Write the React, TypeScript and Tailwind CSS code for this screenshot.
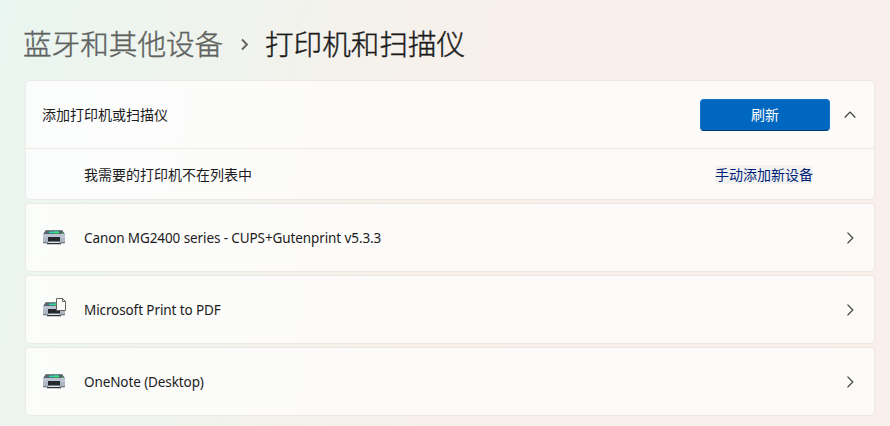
import type { ReactNode } from "react";

function PrinterIcon({ document = false }: { document?: boolean }) {
  return (
    <svg width="24" height="24" viewBox="0 0 24 24" className="block overflow-visible">
      <path d="M4 4h16l3 4.200H1z" fill="#56616a" />
      <path d="M4 4h16l.7 1H3.300z" fill="#77828a" />
      <path d="M7.500 5.500h9l.8 1.700H6.700z" fill="#2cd5b0" />
      <path d="M12.500 5.500h4l.8 1.700h-4.800z" fill="#36e66b" />
      <rect x="20" y="7" width="1.500" height="1" fill="#35e35d" />
      <path d="M1 8h22v8.500a.7.7 0 0 1-.7.7H1.700a.7.7 0 0 1-.7-.7z" fill="#adb7c4" />
      <path d="M1 8h22v4H1z" fill="#bac3cf" />
      <path d="M1 16h22v.500a.7.7 0 0 1-.7.7H1.700a.7.7 0 0 1-.7-.7z" fill="#747f8c" />
      <path d="M6 11h12v5H6z" fill="#24292f" />
      <path d="M6.500 15.500h11l1.300 1.800H5.200z" fill="#d5dae1" />
      <path d="M5.200 17h13.600l.3 1.200H4.900z" fill="#30353a" />
      {document && (
        <g stroke="#62625f" strokeWidth="1">
          <path d="M14.500.5h6l3 3v9h-9z" fill="#fcfcfb" />
          <path d="M20.500.5v3h3" fill="none" />
        </g>
      )}
    </svg>
  );
}

function Chevron({ up = false }: { up?: boolean }) {
  return (
    <svg width="14" height="14" viewBox="0 0 14 14" fill="none" stroke="#3b3b3b" strokeWidth="1.2" className="block">
      <path d={up ? "M1.700 9.500 7 4.200l5.300 5.300" : "M4.500 1.700 9.800 7l-5.300 5.300"} />
    </svg>
  );
}

function PrinterRow({ icon, children }: { icon: ReactNode; children: ReactNode }) {
  return (
    <button className="flex h-[69px] w-full items-center rounded-[5px] border border-[#8c50281c] bg-[linear-gradient(100deg,#fbfdfb,#fcfbf9_35%)] bg-origin-border pr-[17px] pl-4 text-left">
      {icon}
      <span className="ml-[18px] pt-px font-['Noto_Sans','Noto_Sans_CJK_SC',sans-serif] text-[13.500px] leading-5 tracking-[-0.1px] whitespace-nowrap">{children}</span>
      <span className="ml-auto"><Chevron /></span>
    </button>
  );
}

export default function App() {
  return (
    <main className="h-[426px] w-[890px] overflow-hidden bg-[linear-gradient(102deg,#eaf6f1_0%,#eef4ee_16%,#f3f2ed_34%,#f8f0ea_50%,#f9efed_64%,#f9f0ec_100%)] pr-[15px] pl-[25px] font-['Noto_Sans_CJK_SC',sans-serif] text-[14px] text-[#1b1b1b]">
      <h1 className="-ml-[2px] flex h-20 items-center pt-[7px] text-[28.600px] leading-10 font-light whitespace-nowrap [-webkit-text-stroke:0.4px_currentColor]">
        <span className="-mt-[2px] w-[200px] text-[#606260]">蓝牙和其他设备</span>
        <svg width="42" height="14" viewBox="0 0 42 14" fill="none" stroke="#5f5f5f" strokeWidth="1.800" className="block">
          <path d="m19 2.500 5 5-5 5" />
        </svg>
        <span className="-mt-[2px]">打印机和扫描仪</span>
      </h1>
      <div className="flex flex-col gap-[3px]">
        <section className="h-[120px] rounded-[5px] border border-[#8c50281c] bg-[linear-gradient(100deg,#fbfdfd,#fcfbf9_35%)] bg-origin-border">
          <div className="flex h-[68px] items-center border-b border-[#8c50281c] pr-[17px] pl-4">
            <span>添加打印机或扫描仪</span>
            <button className="ml-auto h-8 w-[130px] rounded-[4px] border border-[#1470c5] border-b-[#003e73] bg-[#0067c0] text-white">刷新</button>
            <span className="ml-[13px]"><Chevron up /></span>
          </div>
          <div className="flex h-[50px] items-center justify-between pr-[61px] pl-[58px]">
            <span>我需要的打印机不在列表中</span>
            <a className="rounded-[3px] bg-[#f3f2f1] leading-[19px] text-[#001f78]">手动添加新设备</a>
          </div>
        </section>
        <PrinterRow icon={<PrinterIcon />}>Canon MG2400 series - CUPS+Gutenprint v5.3.3</PrinterRow>
        <PrinterRow icon={<PrinterIcon document />}>Microsoft Print to PDF</PrinterRow>
        <PrinterRow icon={<PrinterIcon />}>OneNote (Desktop)</PrinterRow>
      </div>
    </main>
  );
}
